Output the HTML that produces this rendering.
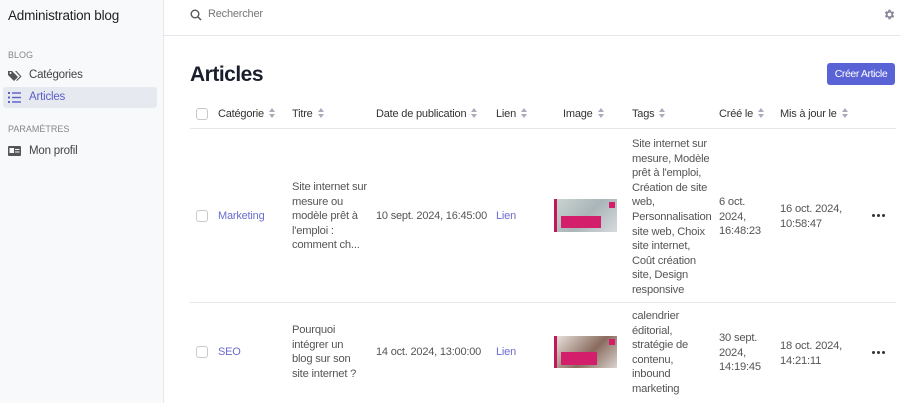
<!DOCTYPE html>
<html><head><meta charset="utf-8"><style>
*{margin:0;padding:0;box-sizing:border-box}
body{width:900px;height:403px;overflow:hidden;font-family:"Liberation Sans",sans-serif;background:#fff;position:relative;color:#555;font-size:11px;letter-spacing:-0.2px}
.a{position:absolute;white-space:nowrap}
.side{position:absolute;left:0;top:0;width:164px;height:403px;background:#f8f9fb;border-right:1px solid #e6e8ec}
.hd{color:#333;font-size:11px}
.sort{display:inline-block;width:7px;height:10px;vertical-align:-1px;margin-left:5px;position:relative}
.sort:before{content:"";position:absolute;left:0;top:0;border:3.5px solid transparent;border-bottom:4px solid #aab;border-top:0}
.sort:after{content:"";position:absolute;left:0;top:6px;border:3.5px solid transparent;border-top:4px solid #aab;border-bottom:0}
.cb{position:absolute;width:12px;height:12px;border:1px solid #c8c8cc;border-radius:3px;background:#fff}
.ml{line-height:14.6px;font-size:11.2px}
.lnk{color:#6a6ccf}
.line{position:absolute;height:1px;background:#e4e6ea}
.dots{position:absolute;width:14px;height:4px}
.dots i{position:absolute;top:0;width:3px;height:3px;border-radius:50%;background:#333}
</style></head><body>
<div class="side">
<div class="a" style="left:8px;top:8px;font-size:13.5px;color:#222;letter-spacing:-0.2px">Administration blog</div>
<div class="a" style="left:8px;top:50px;font-size:9px;color:#888;letter-spacing:0">BLOG</div>
<svg class="a" style="left:8px;top:70px" width="14" height="12" viewBox="0 0 14 12"><path d="M0 1v4l6 6 4-4-6-6H1z" fill="#555"/><path d="M7 1h1.5l5 5.5-4.5 4.5-.8-.8L12 6.5z" fill="#555"/><circle cx="2.5" cy="3" r="1" fill="#f8f9fb"/></svg>
<div class="a" style="left:29px;top:69px;font-size:11.5px;color:#444">Catégories</div>
<div class="a" style="left:3px;top:87px;width:154px;height:21px;background:#e7e9f0;border-radius:3px"></div>
<svg class="a" style="left:8px;top:92px" width="13" height="11" viewBox="0 0 13 11"><g fill="#5a5fc8"><rect x="0" y="0" width="2" height="2"/><rect x="0" y="4.5" width="2" height="2"/><rect x="0" y="9" width="2" height="2"/><rect x="4" y="0.3" width="9" height="1.4"/><rect x="4" y="4.8" width="9" height="1.4"/><rect x="4" y="9.3" width="9" height="1.4"/></g></svg>
<div class="a" style="left:29px;top:91px;font-size:11.5px;color:#5a5fc8">Articles</div>
<div class="a" style="left:8px;top:124px;font-size:9px;color:#888;letter-spacing:0">PARAMÈTRES</div>
<svg class="a" style="left:8px;top:146px" width="13" height="10" viewBox="0 0 13 10"><rect width="13" height="10" rx="1" fill="#555"/><rect x="1.5" y="2" width="4.5" height="5" fill="#f8f9fb"/><rect x="7" y="3" width="4.5" height="1" fill="#f8f9fb"/><rect x="7" y="5.5" width="4.5" height="1" fill="#f8f9fb"/></svg>
<div class="a" style="left:29px;top:145px;font-size:11.5px;color:#444">Mon profil</div>
</div>
<div class="line" style="left:164px;top:35px;width:736px"></div>
<svg class="a" style="left:190px;top:9px" width="12" height="12" viewBox="0 0 12 12"><circle cx="5" cy="5" r="3.8" fill="none" stroke="#555" stroke-width="1.4"/><path d="M8 8l3 3" stroke="#555" stroke-width="1.5"/></svg>
<div class="a" style="left:208px;top:8px;font-size:11px;color:#777">Rechercher</div>
<svg class="a" style="left:883px;top:8px" width="13" height="13" viewBox="0 0 24 24"><path fill="#889" d="M19.4 13a7.5 7.5 0 000-2l2.1-1.6-2-3.5-2.5 1a7.6 7.6 0 00-1.7-1L15 3h-4l-.4 2.8a7.6 7.6 0 00-1.7 1l-2.5-1-2 3.5L6.6 11a7.5 7.5 0 000 2l-2.1 1.6 2 3.5 2.5-1a7.6 7.6 0 001.7 1L11 21h4l.4-2.8a7.6 7.6 0 001.7-1l2.5 1 2-3.5zM13 15.5a3.5 3.5 0 110-7 3.5 3.5 0 010 7z" transform="translate(-1 0)"/></svg>
<div class="a" style="left:190px;top:63px;font-size:21px;font-weight:bold;color:#1a1f2e;letter-spacing:-0.5px">Articles</div>
<div class="a" style="left:827px;top:63px;width:68px;height:22px;background:#5a63d6;border-radius:3px;color:#fff;font-size:10.5px;text-align:center;line-height:22px;letter-spacing:-0.4px">Créer Article</div>
<div class="cb" style="left:196px;top:108px"></div>
<div class="a hd" style="left:218px;top:108px">Catégorie<span class="sort"></span></div>
<div class="a hd" style="left:292px;top:108px">Titre<span class="sort"></span></div>
<div class="a hd" style="left:376px;top:108px">Date de publication<span class="sort"></span></div>
<div class="a hd" style="left:496px;top:108px">Lien<span class="sort"></span></div>
<div class="a hd" style="left:563px;top:108px">Image<span class="sort"></span></div>
<div class="a hd" style="left:632px;top:108px">Tags<span class="sort"></span></div>
<div class="a hd" style="left:719px;top:108px">Créé le<span class="sort"></span></div>
<div class="a hd" style="left:780px;top:108px">Mis à jour le<span class="sort"></span></div>
<div class="line" style="left:190px;top:128px;width:706px"></div>
<div class="cb" style="left:196px;top:210px"></div>
<div class="a lnk" style="left:218px;top:210px">Marketing</div>
<div class="a ml" style="left:292px;top:180px">Site internet sur<br>mesure ou<br>modèle prêt à<br>l'emploi :<br>comment ch...</div>
<div class="a" style="left:376px;top:210px">10 sept. 2024, 16:45:00</div>
<div class="a lnk" style="left:496px;top:210px">Lien</div>
<div class="a" style="left:554px;top:199px;width:63px;height:33px;background:linear-gradient(135deg,#c9d4d0,#a9b5b8 50%,#d7dadd);border-left:3px solid #c0185a"><div style="position:absolute;left:4px;top:17px;width:40px;height:12px;background:#d21e6b"></div><div style="position:absolute;right:2px;top:3px;width:6px;height:6px;background:#d21e6b"></div></div>
<div class="a ml" style="left:632px;top:137px">Site internet sur<br>mesure, Modèle<br>prêt à l'emploi,<br>Création de site<br>web,<br>Personnalisation<br>site web, Choix<br>site internet,<br>Coût création<br>site, Design<br>responsive</div>
<div class="a ml" style="left:719px;top:195px">6 oct.<br>2024,<br>16:48:23</div>
<div class="a ml" style="left:780px;top:202px">16 oct. 2024,<br>10:58:47</div>
<div class="dots" style="left:872px;top:214px"><i style="left:0"></i><i style="left:5px"></i><i style="left:10px"></i></div>
<div class="line" style="left:190px;top:302px;width:706px"></div>
<div class="cb" style="left:196px;top:346px"></div>
<div class="a lnk" style="left:218px;top:346px">SEO</div>
<div class="a ml" style="left:292px;top:323px">Pourquoi<br>intégrer un<br>blog sur son<br>site internet ?</div>
<div class="a" style="left:376px;top:346px">14 oct. 2024, 13:00:00</div>
<div class="a lnk" style="left:496px;top:346px">Lien</div>
<div class="a" style="left:554px;top:336px;width:63px;height:32px;background:linear-gradient(135deg,#e6e0da,#8a6b5e 55%,#d9d4cf);border-left:3px solid #c0185a"><div style="position:absolute;left:4px;top:16px;width:36px;height:13px;background:#d21e6b"></div><div style="position:absolute;right:2px;top:3px;width:6px;height:6px;background:#d21e6b"></div></div>
<div class="a ml" style="left:632px;top:309px">calendrier<br>éditorial,<br>stratégie de<br>contenu,<br>inbound<br>marketing</div>
<div class="a ml" style="left:719px;top:331px">30 sept.<br>2024,<br>14:19:45</div>
<div class="a ml" style="left:780px;top:339px">18 oct. 2024,<br>14:21:11</div>
<div class="dots" style="left:872px;top:351px"><i style="left:0"></i><i style="left:5px"></i><i style="left:10px"></i></div>
</body></html>
